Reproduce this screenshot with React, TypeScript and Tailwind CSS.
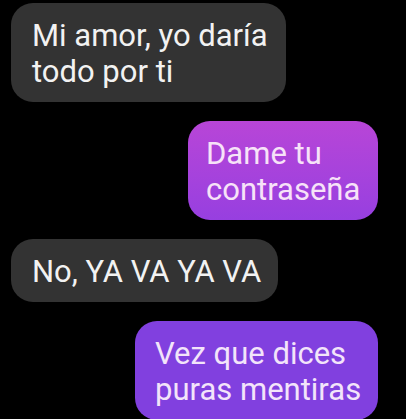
export default function App() {
  const msgs = [
    { mine: false, lines: ["Mi amor, yo daría", "todo por ti"], w: "w-[275px]" },
    { mine: true, lines: ["Dame tu", "contraseña"], w: "w-[190px]" },
    { mine: false, lines: ["No, YA VA YA VA"], w: "w-[267px]" },
    { mine: true, lines: ["Vez que dices", "puras mentiras"], w: "w-[243px]" },
  ];

  return (
    <div className="w-[406px] h-[419px] overflow-hidden bg-black pt-[3px] pl-[11px] pr-[28px] flex flex-col gap-[19px] font-['Roboto',sans-serif]">
      {msgs.map((m, i) => (
        <div
          key={i}
          className={
            m.mine
              ? i === 1
                ? "self-end " + m.w + " rounded-[22px] bg-gradient-to-b from-[#b845d7] to-[#973fe0] text-[#f7e2f8] pl-[18px] pr-2 pt-[15px] pb-[12px] text-[31px] leading-[36px] shrink-0"
                : "self-end " + m.w + " rounded-[22px] bg-[#8140df] text-[#f3e4fa] pl-[20px] pr-2 pt-[15px] pb-[12px] text-[31px] leading-[36px] shrink-0"
              : "self-start " + m.w + " rounded-[22px] bg-[#333333] text-[#f2f2f2] pl-[21px] pr-2 pt-[15px] pb-[12px] text-[31px] leading-[36px] shrink-0"
          }
        >
          {m.lines.map((l, j) => (
            <div key={j} className="whitespace-nowrap">{l}</div>
          ))}
        </div>
      ))}
    </div>
  );
}
